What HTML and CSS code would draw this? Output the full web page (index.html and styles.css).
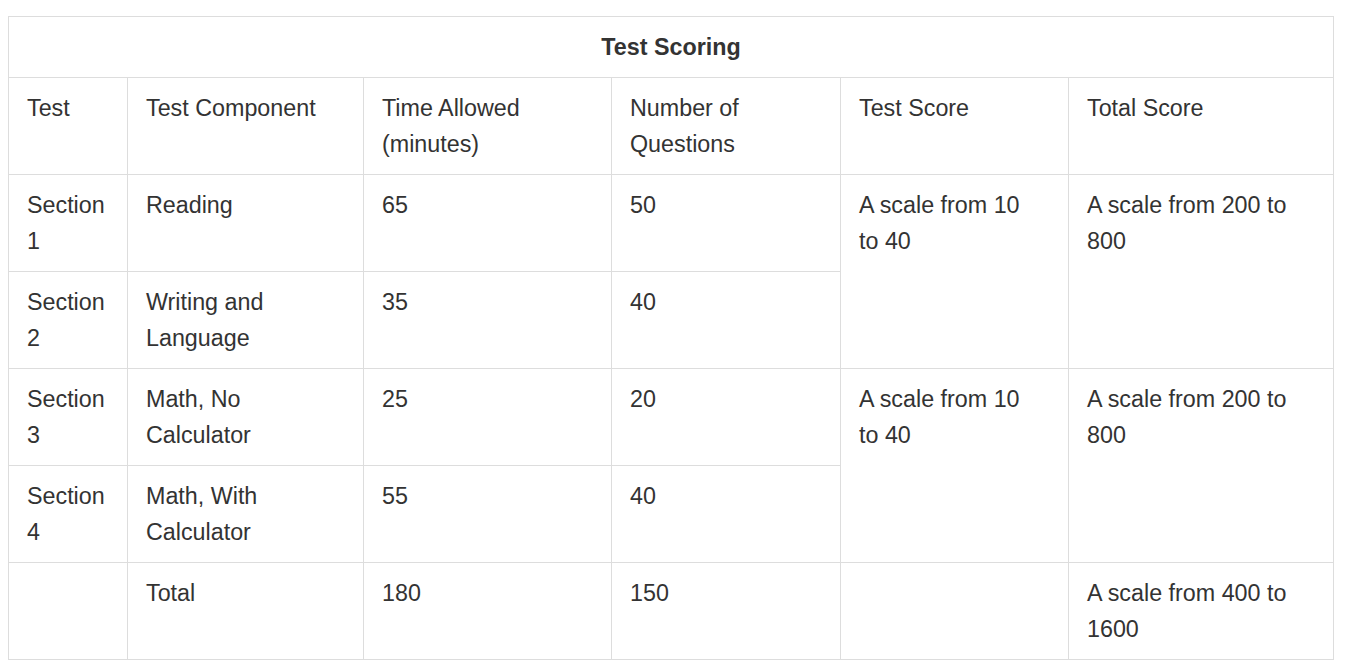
FILE: index.html
```html
<!DOCTYPE html>
<html lang="en">
<head>
<meta charset="utf-8">
<title>Test Scoring</title>
<link rel="stylesheet" href="styles.css">
</head>
<body>
<table class="scoring">
  <colgroup>
    <col class="c1"><col class="c2"><col class="c3"><col class="c4"><col class="c5"><col class="c6">
  </colgroup>
  <thead>
    <tr><th class="title" colspan="6">Test Scoring</th></tr>
  </thead>
  <tbody>
    <tr>
      <td>Test</td>
      <td>Test Component</td>
      <td>Time Allowed (minutes)</td>
      <td>Number of Questions</td>
      <td>Test Score</td>
      <td>Total Score</td>
    </tr>
    <tr>
      <td>Section 1</td>
      <td>Reading</td>
      <td>65</td>
      <td>50</td>
      <td class="scale" rowspan="2">A scale from 10 to 40</td>
      <td class="scale" rowspan="2">A scale from 200 to 800</td>
    </tr>
    <tr>
      <td>Section 2</td>
      <td>Writing and Language</td>
      <td>35</td>
      <td>40</td>
    </tr>
    <tr>
      <td>Section 3</td>
      <td>Math, No Calculator</td>
      <td>25</td>
      <td>20</td>
      <td class="scale" rowspan="2">A scale from 10 to 40</td>
      <td class="scale" rowspan="2">A scale from 200 to 800</td>
    </tr>
    <tr>
      <td>Section 4</td>
      <td>Math, With Calculator</td>
      <td>55</td>
      <td>40</td>
    </tr>
    <tr>
      <td></td>
      <td>Total</td>
      <td>180</td>
      <td>150</td>
      <td></td>
      <td class="scale">A scale from 400 to 1600</td>
    </tr>
  </tbody>
</table>
</body>
</html>
```
FILE: styles.css
```css
html, body {
  margin: 0;
  padding: 0;
  background: #fff;
}
body {
  padding: 16px 13px 0 8px;
  font-family: Arial, "Liberation Sans", sans-serif;
  color: #333;
}
.scoring {
  border-collapse: collapse;
  width: 1325px;
  table-layout: fixed;
  font-size: 23.3px;
  line-height: 36px;
}
.c1 { width: 119px; }
.c2 { width: 236px; }
.c3 { width: 248px; }
.c4 { width: 229px; }
.c5 { width: 228px; }
.c6 { width: 265px; }
.scoring th,
.scoring td {
  border: 1px solid #dddddd;
  padding: 12px 18px;
  vertical-align: top;
  text-align: left;
  font-weight: normal;
}
.scoring td.scale {
  padding-right: 26px;
}
.scoring th.title {
  text-align: center;
  font-weight: bold;
}
```
